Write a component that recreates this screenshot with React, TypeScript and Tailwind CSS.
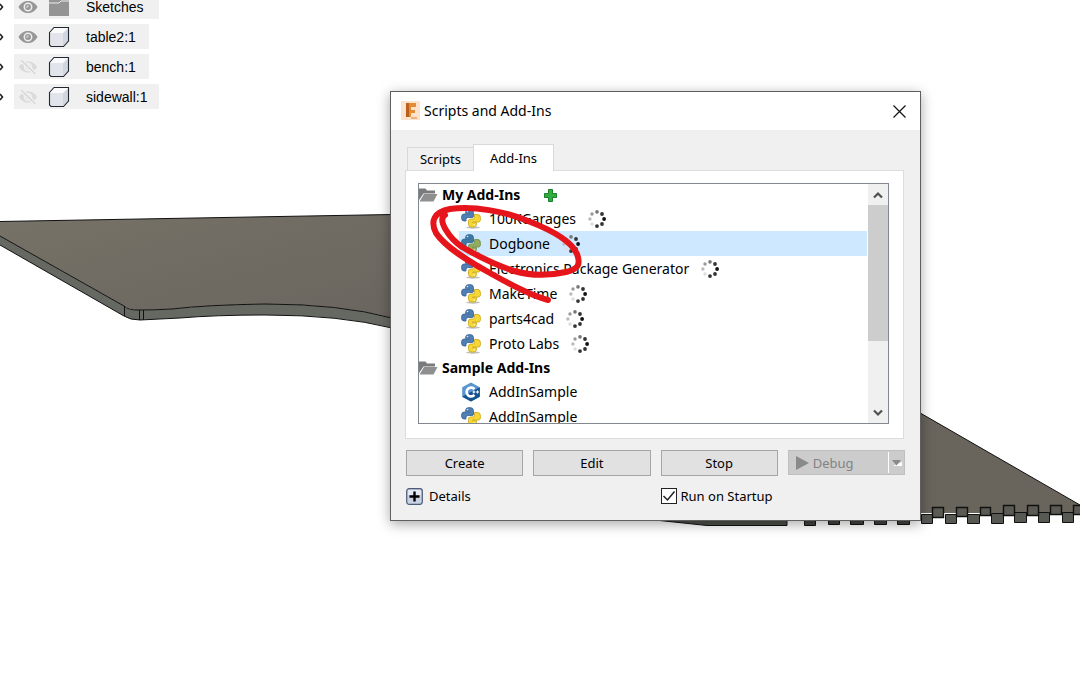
import { useState } from 'react';

type AddIn = { name: string; language: 'python' | 'cpp'; busy: boolean };

const myAddIns: AddIn[] = [
  { name: '100KGarages', language: 'python', busy: true },
  { name: 'Dogbone', language: 'python', busy: true },
  { name: 'Electronics Package Generator', language: 'python', busy: true },
  { name: 'MakeTime', language: 'python', busy: true },
  { name: 'parts4cad', language: 'python', busy: true },
  { name: 'Proto Labs', language: 'python', busy: true },
];

const sampleAddIns: AddIn[] = [
  { name: 'AddInSample', language: 'cpp', busy: false },
  { name: 'AddInSample', language: 'python', busy: false },
];

function PythonIcon({ selected }: { selected: boolean }) {
  return (
    <svg viewBox="0 0 20 20" className="size-5 shrink-0" aria-hidden="true">
      <ellipse cx="12" cy="18.5" rx="7" ry="1.200" fill="#000" opacity="0.25" />
      <path
        d="M4.500 3.500Q4.500.5 8.500.5T12.500 3.500V7Q12.500 8.500 11 8.500H7Q5 8.500 5 10.500V12H3Q.5 12 .5 8.500T3 5H8.500V4.300H4.500z"
        fill={selected ? '#3f7aa5' : '#4f7fb5'}
        stroke={selected ? '#2f638b' : '#35618f'}
        strokeWidth="0.8"
      />
      <path
        d="M13.500 5.500H17Q19.500 5.500 19.500 9.500T17 13H11.500V13.700H15.500V15.500Q15.500 18.200 11.500 18.200T7.500 15.500V12Q7.500 10 9.500 10H12Q13.500 10 13.500 8.300z"
        fill={selected ? '#93ad5c' : '#f6d733'}
        stroke={selected ? '#708b45' : '#c6a51c'}
        strokeWidth="0.8"
      />
      <circle cx="6.500" cy="2.500" r=".8" fill="#e6eef6" />
      <circle cx="13.300" cy="16" r=".8" fill="#fff8d8" />
    </svg>
  );
}

function CppIcon() {
  return (
    <svg viewBox="0 0 20 20" className="size-5 shrink-0" aria-hidden="true">
      <path d="M10 .6 18.800 5.200v9.600L10 19.400 1.200 14.800V5.200z" fill="#5b95cf" />
      <path d="M18.800 5.200v9.600L10 19.400 1.200 14.800 10 10z" fill="#15508f" />
      <path d="M13.400 7.200a4.400 4.400 0 1 0 0 5.600" fill="none" stroke="#fff" strokeWidth="2.600" />
      <path d="M11.400 10h3M12.900 8.500v3M15 10h3M16.500 8.500v3" stroke="#fff" strokeWidth="1.200" />
    </svg>
  );
}

function FolderIcon() {
  return (
    <svg viewBox="0 0 19 16" className="h-4 w-[19px] shrink-0" aria-hidden="true">
      <path d="M0 1.500h6.500L8 3.500h8v3H4.500L0 13z" fill="#7b7b7b" />
      <path d="M5 7h13.500L14.500 14.500H.5z" fill="#8f8f8f" />
    </svg>
  );
}

function Spinner() {
  return (
    <svg viewBox="0 0 18 18" className="size-[18px] shrink-0" aria-hidden="true">
      <circle cx="9" cy="1.900" r="1.800" fill="#777" />
      <circle cx="14" cy="4" r="1.900" fill="#333" />
      <circle cx="16.100" cy="9" r="1.900" fill="#111" />
      <circle cx="14" cy="14" r="1.900" fill="#333" />
      <circle cx="9" cy="16.100" r="1.900" fill="#333" />
      <circle cx="4" cy="14" r="1.700" fill="#ddd" />
      <circle cx="1.900" cy="9" r="1.700" fill="#bbb" />
      <circle cx="4" cy="4" r="1.700" fill="#999" />
    </svg>
  );
}

function EyeIcon({ visible }: { visible: boolean }) {
  return visible ? (
    <svg viewBox="0 0 20 14" className="h-3.5 w-5" aria-hidden="true">
      <path d="M.5 7C3 2.600 6.300.9 10 .9S17 2.600 19.500 7C17 11.400 13.700 13.100 10 13.100S3 11.400.5 7z" fill="#979797" />
      <circle cx="10" cy="7" r="3.700" fill="none" stroke="#ededed" strokeWidth="1.500" />
      <path d="M10 5v2H8" fill="none" stroke="#dedede" />
    </svg>
  ) : (
    <svg viewBox="0 0 20 14" className="h-3.5 w-5" aria-hidden="true">
      <path d="M1 7c2.500-4.200 5.500-5.500 9-5.500S16.500 2.800 19 7c-2.500 4.200-5.500 5.500-9 5.500S3.500 11.200 1 7z" fill="#dadada" />
      <circle cx="10" cy="7" r="3.400" fill="none" stroke="#f0f0f0" strokeWidth="1.700" />
      <path d="M3 0l14.500 14" stroke="#f0f0f0" strokeWidth="4" />
      <path d="M3 0l14.500 14" stroke="#d6d6d6" strokeWidth="1.400" />
    </svg>
  );
}

function BodyIcon() {
  return (
    <svg viewBox="0 0 22 22" className="size-[22px]" aria-hidden="true">
      <path d="M1.500 6.500 6 1.500h14.500v13.500l-5 5.500H3L1.500 19z" fill="#fafafc" />
      <path d="M2 7h13v13H3L2 19z" fill="#e1e4ea" />
      <path d="M15 7l5.500-5v13l-5.500 5z" fill="#d2d6de" />
      <path d="M1.500 6.500 6 1.500h14.500v13.500l-5 5.500H3L1.500 19z" fill="none" stroke="#222831" strokeWidth="1.100" />
    </svg>
  );
}

function SketchFolderIcon() {
  return (
    <svg viewBox="0 0 22 22" className="size-[22px]" aria-hidden="true">
      <path d="M1 3h20v17H1z" fill="#949494" />
      <path d="M1 7h10l2-2h8" fill="none" stroke="#ededed" />
    </svg>
  );
}

function BrowserRow({ label, visible, folder, wide }: { label: string; visible: boolean; folder?: boolean; wide?: boolean }) {
  return (
    <li className="flex h-[25px] items-center">
      <svg viewBox="0 0 14 12" className="h-3 w-3.5" aria-hidden="true">
        <path d="M0 3l2.500 3L0 9" fill="none" stroke="#222" strokeWidth="1.600" />
      </svg>
      <div className={`flex h-full items-center bg-[#f0f0f0] pl-1 ${wide ? 'w-[145px]' : 'w-[135px]'}`}>
        <EyeIcon visible={visible} />
        <span className="pl-2.5">{folder ? <SketchFolderIcon /> : <BodyIcon />}</span>
        <span className="pl-4">{label}</span>
      </div>
    </li>
  );
}

function ModelView() {
  return (
    <svg viewBox="0 0 1080 684" className="absolute top-0 left-0 h-[684px] w-[1080px]" aria-hidden="true">
      <defs>
        <linearGradient id="board" x1="0" y1="0" x2="1" y2="1">
          <stop offset="0" stopColor="#777267" />
          <stop offset="1" stopColor="#6a655e" />
        </linearGradient>
      </defs>
      <path d="M0 221.500 392 214.500V318Q340 304 265 304Q205 305 172 309Q155 310 137 310Q128 309 124 306L0 236z" fill="url(#board)" />
      <path d="M0 236 124 306Q128 310 138 310Q155 310 172 309Q205 305 265 304Q340 304 392 318V328Q340 315 265 315Q215 315 180 318L140 320Q130 320 124 316L0 245z" fill="#666862" />
      <path d="M0 221.500 392 214.500M0 236 124 306Q128 310 138 310Q155 310 172 309Q205 305 265 304Q340 304 392 318M0 245 124 316Q130 320 140 320L180 318Q215 315 265 315Q340 315 392 328M124.500 306v10M139.500 310v10M143.500 310v10" fill="none" stroke="#111" />
      <path d="M915 410 1080 505v8H915z" fill="#69645c" />
      <path d="M915 410 1080 505" stroke="#111" />
      <g fill="#575a53" stroke="#111">
        <path d="M921.500 514.500h11v9h-11zM945.500 514.500h11v9h-11zM967.500 514.500h12v9h-12zM991.500 513.500h12v10h-12zM1014.500 512.500h12v10h-12zM1038.500 512.500h11v10h-11zM1062.500 512.500h11v10h-11z" />
        <path d="M932.500 507.500h11v10h-11zM956.500 507.500h11v9h-11zM980.500 507.500h10v8h-10zM1003.500 505.500h11v10h-11zM1027.500 505.500h11v10h-11zM1050.500 505.500h11v9h-11zM1073.500 505.500h9v9h-9z" fill="#5b5b53" strokeWidth="1.400" />
      </g>
      <path d="M655 520l52 5.500h80V518H655z" fill="#4d5049" stroke="#111" />
      <path d="M804.500 518h11v7.500h-11zM828.500 518h11v6.500h-11zM850.500 518h13v6.500h-13zM874.500 518h12v6.500h-12zM897.500 518h12v6.500h-12z" fill="#41443e" stroke="#111" />
    </svg>
  );
}

function Group({ title, items, canAdd, selected, onSelect }: {
  title: string;
  items: AddIn[];
  canAdd?: boolean;
  selected?: string;
  onSelect?: (name: string) => void;
}) {
  return (
    <section>
      <div className="flex h-[22px] items-center">
        <FolderIcon />
        <h2 className="pl-1 font-bold">{title}</h2>
        {canAdd && (
          <button type="button" aria-label="Add" className="ml-6">
            <svg viewBox="0 0 13 13" className="size-[13px]" aria-hidden="true">
              <path d="M4.500.5h4v4h4v4h-4v4h-4v-4h-4v-4h4z" fill="#2fae3f" stroke="#18802a" />
            </svg>
          </button>
        )}
      </div>
      <ul>
        {items.map((item) => {
          const active = selected === item.name;
          return (
            <li key={item.name + item.language}>
              <button
                type="button"
                onClick={() => onSelect?.(item.name)}
                className={`flex h-[25px] w-full items-center pl-[42px] ${active ? 'bg-[linear-gradient(90deg,transparent_40px,#cde8ff_40px)]' : ''}`}
              >
                {item.language === 'python' ? <PythonIcon selected={active} /> : <CppIcon />}
                <span className="pr-3 pl-2">{item.name}</span>
                {item.busy && <Spinner />}
              </button>
            </li>
          );
        })}
      </ul>
    </section>
  );
}

const buttonClass = 'h-[26px] border border-[#a5a5a5] bg-[#e1e1e1] text-center';

export default function App() {
  const [selected, setSelected] = useState('Dogbone');
  const [startup, setStartup] = useState(true);

  return (
    <main className="relative min-h-screen overflow-hidden bg-white text-black">
      <ModelView />

      <nav aria-label="Browser" className="absolute -top-1.5 left-0 font-[Liberation_Sans,sans-serif] text-sm leading-5">
        <ul className="flex flex-col gap-[5px]">
          <BrowserRow label="Sketches" visible folder wide />
          <BrowserRow label="table2:1" visible />
          <BrowserRow label="bench:1" visible={false} />
          <BrowserRow label="sidewall:1" visible={false} wide />
        </ul>
      </nav>

      <div
        role="dialog"
        aria-labelledby="dialog-title"
        className="absolute top-[91px] left-[390px] w-[531px] border border-[#5f5f5f] bg-[#f0f0f0] font-[Noto_Sans,sans-serif] text-[13px] leading-5 shadow-[0_3px_12px_rgba(0,0,0,0.35)]"
      >
        <header className="flex h-[38px] items-center bg-white pr-2.5 pl-2.5">
          <svg viewBox="0 0 20 20" className="size-5" aria-hidden="true">
            <path d="M0 0h19v19H0z" fill="#fbe3cd" />
            <path d="M5 2h10v4h-5v3h4v3h-4v4H5z" fill="#e58a35" />
            <path d="M5 2h3v14H5z" fill="#b9611b" />
            <path d="M10 17h6" stroke="#e8a468" strokeWidth="1.500" />
          </svg>
          <h1 id="dialog-title" className="pl-[3px] text-sm leading-5">Scripts and Add-Ins</h1>
          <button type="button" aria-label="Close" className="ml-auto p-1">
            <svg viewBox="0 0 13 13" className="size-[13px]" aria-hidden="true">
              <path d="M.5.5l12 12M12.500.5l-12 12" stroke="#111" strokeWidth="1.200" />
            </svg>
          </button>
        </header>

        <div className="px-3.5 pt-3.5 pb-3.5">
          <div role="tablist" className="flex items-end pl-0.5">
            <button type="button" role="tab" aria-selected="false" className="h-[23px] w-[66px] border border-r-0 border-b-0 border-[#d9d9d9] leading-[18px]">
              Scripts
            </button>
            <button type="button" role="tab" aria-selected="true" className="relative -mb-px h-[27px] w-[81px] border border-b-0 border-[#d9d9d9] bg-white">
              Add-Ins
            </button>
          </div>

          <div role="tabpanel" className="mr-0.5 border border-[#dcdcdc] bg-white pt-3 pr-3.5 pb-3.5 pl-3">
            <div className="flex h-[241px] border border-[#828790]">
              <div className="flex min-w-0 flex-1 flex-col gap-px overflow-hidden text-sm leading-5">
                <Group title="My Add-Ins" items={myAddIns} canAdd selected={selected} onSelect={setSelected} />
                <Group title="Sample Add-Ins" items={sampleAddIns} />
              </div>
              <div className="ml-px flex w-5 flex-col bg-[#f0f0f0]">
                <button type="button" aria-label="Scroll up" className="flex h-[21px] items-center justify-center">
                  <svg viewBox="0 0 10 8" className="h-2 w-2.5" aria-hidden="true">
                    <path d="M1 6.500 5 2.500l4 4" fill="none" stroke="#505050" strokeWidth="2.200" />
                  </svg>
                </button>
                <div className="h-[136px] bg-[#cdcdcd]" />
                <button type="button" aria-label="Scroll down" className="mt-auto flex h-[21px] items-center justify-center">
                  <svg viewBox="0 0 10 8" className="h-2 w-2.5" aria-hidden="true">
                    <path d="M1 1.500l4 4 4-4" fill="none" stroke="#505050" strokeWidth="2.200" />
                  </svg>
                </button>
              </div>
            </div>
          </div>

          <div className="mt-[11px] grid grid-cols-4 gap-2.5 px-px">
            <button type="button" className={buttonClass}>Create</button>
            <button type="button" className={buttonClass}>Edit</button>
            <button type="button" className={buttonClass}>Stop</button>
            <div className="flex h-[25px] border border-[#bfbfbf] bg-[#cccccc] text-[#838383]">
              <button type="button" disabled className="flex flex-1 items-center gap-1 pl-1.5">
                <svg viewBox="0 0 14 14" className="size-3.5" aria-hidden="true">
                  <path d="M1 0l13 7-13 7z" fill="#8a8a8a" />
                </svg>
                Debug
              </button>
              <button type="button" disabled aria-label="Debug options" className="my-px flex w-4 items-center justify-center border-l border-white">
                <svg viewBox="0 0 10 6" className="h-1.5 w-2.5" aria-hidden="true">
                  <path d="M1 6h9V2z" fill="#fff" />
                  <path d="M0 0h9L4.500 5.500z" fill="#8a8a8a" />
                </svg>
              </button>
            </div>
          </div>

          <div className="mt-2.5 grid grid-cols-4 items-center gap-2.5 px-px">
            <button type="button" aria-expanded="false" className="col-span-2 flex items-center gap-1.5">
              <svg viewBox="0 0 17 17" className="size-[17px]" aria-hidden="true">
                <rect x=".7" y=".7" width="15.600" height="15.600" rx="2.500" fill="#c9d2e3" stroke="#4d5a78" strokeWidth="1.200" />
                <path d="M2 2h13v5H2z" fill="#e4e9f2" />
                <path d="M8.500 3.500v10M3.500 8.500h10" stroke="#000" strokeWidth="2.400" />
              </svg>
              Details
            </button>
            <label className="col-span-2 flex items-center gap-1">
              <span className="grid size-4 place-items-center">
                <input
                  type="checkbox"
                  checked={startup}
                  onChange={(event) => setStartup(event.target.checked)}
                  className="col-start-1 row-start-1 size-4 appearance-none border border-[#222] bg-white"
                />
                {startup && (
                  <svg viewBox="0 0 14 12" className="pointer-events-none col-start-1 row-start-1 h-3 w-3.5" aria-hidden="true">
                    <path d="M1.500 6l4 4 7-8.500" fill="none" stroke="#222" strokeWidth="1.500" />
                  </svg>
                )}
              </span>
              Run on Startup
            </label>
          </div>
        </div>
      </div>

      <svg viewBox="0 0 170 110" className="pointer-events-none absolute top-[200px] left-[420px] h-[110px] w-[170px]" aria-hidden="true">
        <path
          d="M128 100C108 95 86 82 70 73C50 62 26 48 16 33C10 21 14 12 30 9C54 6 84 11 108 21C134 31 152 42 157 54C161 65 158 69 146 72C128 76 112 76 94 71C72 64 56 55 42 47C29 38 17 20 25 15"
          fill="none"
          stroke="#e5151b"
          strokeWidth="6"
          strokeLinecap="round"
          strokeLinejoin="round"
        />
      </svg>
    </main>
  );
}
